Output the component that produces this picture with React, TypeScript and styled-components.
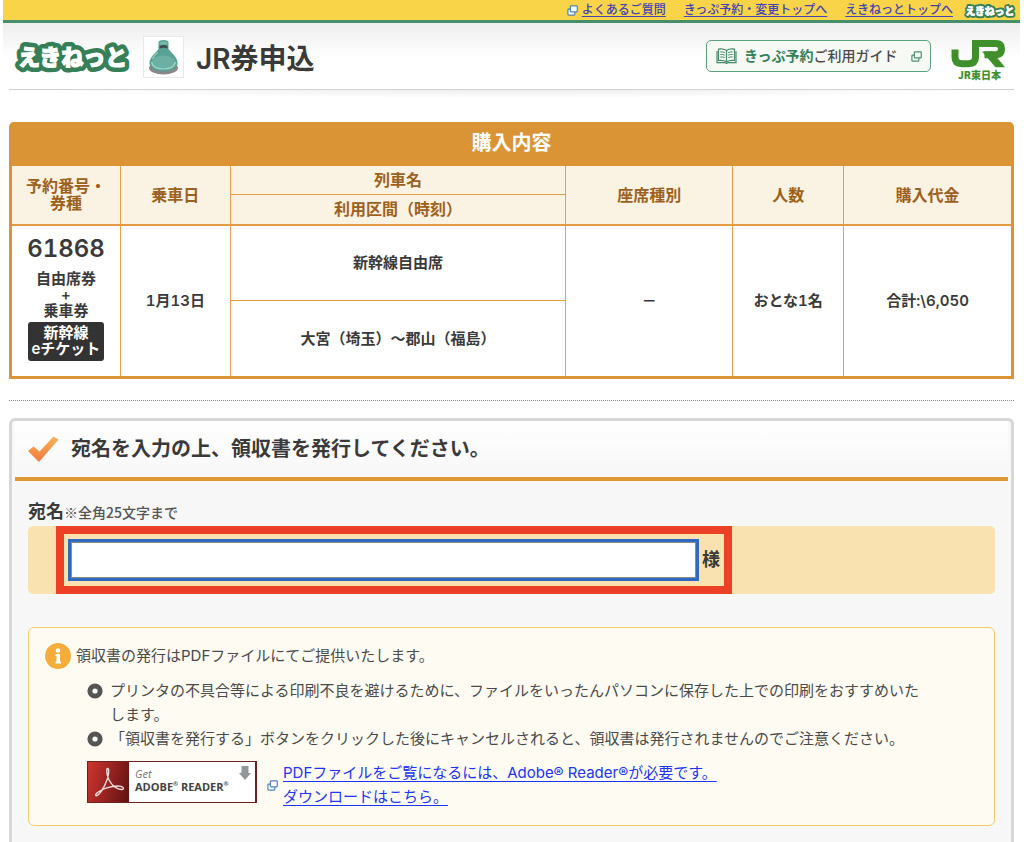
import React from 'react';
import styled, { createGlobalStyle } from 'styled-components';

const GlobalStyle = createGlobalStyle`
  *, *::before, *::after { box-sizing: border-box; }
  body {
    margin: 0;
    background: #fff;
    color: #3a3a3a;
    font-family: Inter, "Noto Sans CJK JP", sans-serif;
    font-size: 15px;
    line-height: 24px;
  }
  h1, h2, p, ul { margin: 0; padding: 0; }
  svg { display: block; flex: none; }
`;

const Page = styled.div`
  display: flex;
  flex-direction: column;
  min-height: 100vh;
  padding: 0 4px 0 3px;
`;

const TopBar = styled.nav`
  display: flex;
  align-items: center;
  justify-content: flex-end;
  gap: 18px;
  height: 23px;
  padding-right: 3px;
  background: #f9d449;
  border-bottom: 3px solid #45906b;
`;

const TopLink = styled.a`
  display: flex;
  align-items: center;
  gap: 4px;
  color: #4343b4;
  font-size: 12px;
  font-weight: 500;
  line-height: 20px;
  text-decoration: none;
  span { text-decoration: underline; text-underline-offset: 2px; }
`;

const TopEnd = styled.div`
  display: flex;
  align-items: center;
  gap: 10px;
`;

const Header = styled.header`
  display: flex;
  align-items: center;
  height: 66px;
  padding: 0 14px 0 10px;
  background: linear-gradient(#eeeeee, #ffffff 36px);
`;

const BagFrame = styled.div`
  display: flex;
  justify-content: center;
  align-items: center;
  width: 41px;
  height: 42px;
  margin: 2px 12px 0 10px;
  background: #fff;
  border: 1px solid #e9e9e9;
`;

const Title = styled.h1`
  flex: 1;
  padding-top: 5px;
  font-size: 28px;
  line-height: 40px;
  font-weight: 600;
`;

const GuideLink = styled.a`
  display: flex;
  align-items: center;
  gap: 7px;
  width: 225px;
  height: 32px;
  margin-right: 20px;
  padding: 0 8px 0 9px;
  border: 1px solid #5ba27f;
  border-radius: 5px;
  background: #f6f9f4;
  color: #4a4a4a;
  font-size: 14px;
  font-weight: 500;
  text-decoration: none;
  white-space: nowrap;
  strong { color: #357f5b; }
  svg:last-child { margin-left: auto; }
`;

const JrMark = styled.div`
  padding-top: 6px;
`;

const HeaderRule = styled.div`
  height: 9px;
  margin: 0 6px;
  border-top: 1px solid #d2d2d2;
  background: radial-gradient(ellipse 50% 100% at 50% 0, #ededed, #ffffff);
`;

const Main = styled.main`
  display: flex;
  flex: 1;
  flex-direction: column;
  padding: 24px 6px 0;
`;

const Purchase = styled.section`
  border: 3px solid #db9435;
  border-radius: 5px 5px 0 0;
  background: #fff;
`;

const PurchaseTitle = styled.h2`
  height: 41px;
  background: #db9435;
  color: #fff;
  font-size: 20px;
  line-height: 36px;
  font-weight: 700;
  text-align: center;
`;

const Table = styled.table`
  width: 100%;
  table-layout: fixed;
  border-collapse: separate;
  border-spacing: 0;
  text-align: center;
  font-variant-numeric: tabular-nums;
`;

const Col = styled.col<{ $w?: number }>`
  width: ${({ $w }) => ($w ? `${$w}%` : 'auto')};
`;

const HeadCell = styled.th<{ $line?: boolean; $first?: boolean }>`
  height: 29px;
  padding: 0;
  background: #faf2e2;
  border-left: ${({ $first }) => ($first ? 0 : 1)}px solid #e5a04b;
  border-bottom: ${({ $line }) => ($line ? 1 : 0)}px solid #e5a04b;
  color: #9c6120;
  font-size: 16px;
  line-height: 17px;
  font-weight: 700;
`;

const Cell = styled.td<{ $top?: number; $first?: boolean }>`
  height: 76px;
  padding: 0;
  border-left: ${({ $first }) => ($first ? 0 : 1)}px solid #e5a04b;
  border-top: ${({ $top = 2 }) => $top}px solid #e39a40;
  font-size: 15px;
  line-height: 16px;
  font-weight: 600;
`;

const TicketNumber = styled.div`
  font-size: 24px;
  line-height: 24px;
  margin-bottom: 10px;
`;

const TicketBadge = styled.div`
  width: 76px;
  margin: 3px auto 5px;
  padding: 3px 0 4px;
  border-radius: 3px;
  background: #333;
  color: #fff;
`;

const Divider = styled.hr`
  width: 100%;
  margin: 21px 0 17px;
  border: 0;
  border-top: 1px dotted #8c8c8c;
`;

const Panel = styled.section`
  flex: 1;
  border: solid #d7d7d7;
  border-width: 3px 3px 0;
  border-radius: 6px 6px 0 0;
  background: #f7f7f7;
`;

const PanelHead = styled.div`
  display: flex;
  align-items: center;
  gap: 12px;
  height: 60px;
  margin: 0 3px;
  padding-left: 13px;
  border-bottom: 4px solid #e09735;
  background: linear-gradient(#ffffff, #f7f7f7);
`;

const PanelTitle = styled.h2`
  font-size: 20px;
  line-height: 32px;
  font-weight: 600;
`;

const PanelBody = styled.form`
  padding: 19px 16px 16px;
`;

const FieldLabel = styled.label`
  display: block;
  font-size: 18px;
  line-height: 24px;
  font-weight: 600;
  small {
    color: #555;
    font-family: "Noto Sans CJK JP", sans-serif;
    font-size: 14px;
    font-weight: 500;
  }
`;

const FieldBand = styled.div`
  height: 68px;
  margin: 2px 0 33px;
  padding-left: 28px;
  border-radius: 5px;
  background: #f9e1b0;
`;

const Highlight = styled.div`
  display: flex;
  align-items: center;
  gap: 3px;
  width: 72%;
  height: 68px;
  padding: 4px;
  border: 8px solid #ec4027;
  font-size: 18px;
  font-weight: 700;
`;

const NameInput = styled.input`
  flex: 1;
  min-width: 0;
  height: 42px;
  padding: 0 8px;
  border: 4px solid #8d8d8d;
  outline: 3px solid #2f6ac0;
  outline-offset: -3px;
  background: #fff;
  font: inherit;
`;

const InfoBox = styled.div`
  padding: 15px 16px 16px;
  border: 1px solid #f4cb68;
  border-radius: 6px;
  background: #fefbf3;
  color: #4a4a4a;
`;

const InfoLead = styled.p`
  display: flex;
  align-items: center;
  gap: 5px;
  height: 26px;
`;

const Notes = styled.ul`
  margin-top: 10px;
  padding: 0 48px 0 42px;
  list-style: none;
`;

const Note = styled.li`
  display: flex;
  gap: 7px;
  svg { margin-top: 4px; }
`;

const ReaderRow = styled.div`
  display: flex;
  align-items: flex-start;
  gap: 10px;
  margin-top: 10px;
  padding-left: 42px;
`;

const ReaderLink = styled.a`
  display: flex;
  align-items: center;
  gap: 5px;
  color: #2034f5;
  text-underline-offset: 3px;
`;

const ReaderBadge = styled.a`
  display: flex;
  width: 170px;
  height: 42px;
  border: 1px solid #6d2222;
  border-right-width: 2px;
  background: #fff;
  color: #444;
  text-decoration: none;
`;

const BadgeMark = styled.span`
  display: flex;
  width: 41px;
  background: linear-gradient(105deg, #cf352f, #5f1111);
`;

const BadgeText = styled.span`
  display: flex;
  flex: 1;
  flex-direction: column;
  justify-content: flex-start;
  padding: 4px 0 0 6px;
  font-family: "Open Sans", sans-serif;
  font-size: 11px;
  line-height: 13px;
  white-space: nowrap;
  em { color: #777; }
  strong { font-weight: 700; }
  sup { font-size: 6px; line-height: 0; }
`;

const BadgeTop = styled.span`
  display: flex;
  align-items: flex-end;
  justify-content: space-between;
  padding-right: 4px;
`;

const PopupIcon = ({ color, fill = '#fff', size = 11 }: { color: string; fill?: string; size?: number }) => (
  <svg width={size} height={size} viewBox="0 0 12 12" aria-hidden="true">
    <rect x="1" y="4.5" width="7.5" height="6.5" rx=".6" fill={fill} stroke={color} strokeWidth="1.3" />
    <rect x="3.7" y="1" width="7.5" height="6.5" rx=".6" fill={fill} stroke={color} strokeWidth="1.3" />
  </svg>
);

const EkinetLogo = ({ small = false }: { small?: boolean }) => (
  <svg width={small ? 54 : 120} height={small ? 17 : 38} viewBox="0 0 120 38" role="img" aria-label="えきねっと">
    <text
      x="5"
      y="28"
      fontFamily='"Noto Sans CJK JP", sans-serif'
      fontSize="22"
      fontWeight="900"
      fill="#fff"
      stroke="#377f58"
      strokeWidth="10"
      strokeLinejoin="round"
      paintOrder="stroke"
    >
      えきねっと
    </text>
    <text x="5" y="28" fontFamily='"Noto Sans CJK JP", sans-serif' fontSize="22" fontWeight="900" fill="#fff" stroke="#fff" strokeWidth="1">
      えきねっと
    </text>
  </svg>
);

const BagIcon = () => (
  <svg width="33" height="38" viewBox="0 0 33 38" aria-hidden="true">
    <ellipse cx="16.5" cy="30" rx="14.5" ry="6.5" fill="#8b8787" />
    <path d="M11.500 4Q12 2 16.500 2Q21 2 21.500 4V11Q23 13 27 17Q31 22 30.500 26Q29 33.500 16.500 33.500Q4 33.500 2.500 26Q2 22 6 17Q10 13 11.500 11Z" fill="#58a294" />
    <path d="M12.500 4.500Q16.500 2.500 20.500 4.500V6.500H12.500Z" fill="#74b9ac" />
    <path d="M12.500 8Q16.500 6 20.500 8V10.500Q16.500 9 12.500 10.500Z" fill="#3c4e4b" />
    <ellipse cx="16.500" cy="24" rx="11.500" ry="6.500" fill="#6bb0a2" />
    <path d="M4.500 24Q6 31 16.500 31Q27 31 28.500 24" fill="none" stroke="#a5d6cb" strokeWidth="1.200" />
    <path d="M10.500 14.500Q6.500 17.500 5.500 21" fill="none" stroke="#93ccbf" strokeWidth="1.500" />
  </svg>
);

const BookIcon = () => (
  <svg width="21" height="16" viewBox="0 0 21 16" aria-hidden="true">
    <path d="M10.500 2.500Q7 .3 2.500 1.200V12.500Q7 11.700 10.500 13.800Q14 11.700 18.500 12.500V1.200Q14 .3 10.500 2.500V13.800" fill="#f6f9f4" stroke="#43896a" strokeWidth="1.200" />
    <path d="M1 3V14.700H9L10.500 15.400L12 14.700H20V3" fill="none" stroke="#43896a" strokeWidth="1.200" />
    <path d="M4.300 4Q6.500 3.600 8.800 4.600M4.300 6.500Q6.500 6.100 8.800 7.100M4.300 9Q6.500 8.600 8.800 9.600M16.700 4Q14.500 3.600 12.200 4.600M16.700 6.500Q14.500 6.100 12.200 7.100M16.700 9Q14.500 8.600 12.200 9.600" fill="none" stroke="#43896a" strokeWidth="1" />
  </svg>
);

const JrLogo = () => (
  <svg width="55" height="43" viewBox="0 0 55 43" role="img" aria-label="JR東日本">
    <path d="M4 11.500V19Q4 25.700 11 25.700H17.500Q24.500 25.700 24.500 19V5.500H45Q50.500 5.500 50.500 11T45 16.700H33.500" fill="none" stroke="#3f8f2b" strokeWidth="7" />
    <path d="M31 13.500H41L54 29.200H44.500Z" fill="#3f8f2b" />
    <text x="7" y="41" fontFamily='"Noto Sans CJK JP", sans-serif' fontSize="10" fontWeight="900" fill="#3f8f2b">
      JR東日本
    </text>
  </svg>
);

const CheckIcon = () => (
  <svg width="31" height="28" viewBox="0 0 31 28" aria-hidden="true">
    <defs>
      <linearGradient id="check" x1="0" y1="0" x2="0" y2="1">
        <stop offset="0" stopColor="#f8b25a" />
        <stop offset="1" stopColor="#ee7a3c" />
      </linearGradient>
    </defs>
    <path d="M0 16L5.500 11.500L11.500 16.500L25.500 1.500L30.500 4.500L11 27Z" fill="url(#check)" />
  </svg>
);

const InfoIcon = () => (
  <svg width="26" height="26" viewBox="0 0 26 26" aria-hidden="true">
    <circle cx="13" cy="13" r="13" fill="#f5ae3b" />
    <circle cx="13" cy="7.500" r="2.300" fill="#fff" />
    <path d="M10.500 11H15V18.500H16V20.500H10.500V18.500H11.500V13H10.500Z" fill="#fff" />
  </svg>
);

const BulletIcon = () => (
  <svg width="16" height="16" viewBox="0 0 16 16" aria-hidden="true">
    <circle cx="8" cy="8" r="5.100" fill="#fefaf1" stroke="#555" strokeWidth="5" />
  </svg>
);

const AcrobatIcon = () => (
  <svg width="41" height="40" viewBox="0 0 41 40" aria-hidden="true">
    <path
      d="M19.500 6.500C18 7 19 14 21 18C24 24 30 28 34 27.500C37 27 35 24 30 24C23 24 14 27 9.500 30.500C6 33.500 8 35 11 32C15 28 19.500 19 20.500 12C21 8 20.500 6.200 19.500 6.500Z"
      fill="none"
      stroke="#ecdcdc"
      strokeWidth="1.400"
    />
  </svg>
);

const DownArrow = () => (
  <svg width="12" height="14" viewBox="0 0 12 14" aria-hidden="true">
    <path d="M2.500 0H9.500V7H12L6 14L0 7H2.500Z" fill="#929699" />
  </svg>
);

export default function App() {
  return (
    <>
      <GlobalStyle />
      <Page>
        <TopBar>
          <TopLink href="#faq">
            <PopupIcon color="#4b84ae" />
            <span>よくあるご質問</span>
          </TopLink>
          <TopLink href="#reserve"><span>きっぷ予約・変更トップへ</span></TopLink>
          <TopEnd>
            <TopLink href="#top"><span>えきねっとトップへ</span></TopLink>
            <EkinetLogo small />
          </TopEnd>
        </TopBar>
        <Header>
          <EkinetLogo />
          <BagFrame><BagIcon /></BagFrame>
          <Title>JR券申込</Title>
          <GuideLink href="#guide">
            <BookIcon />
            <span><strong>きっぷ予約</strong>ご利用ガイド</span>
            <PopupIcon color="#4b8f70" fill="#f6f9f4" />
          </GuideLink>
          <JrMark><JrLogo /></JrMark>
        </Header>
        <HeaderRule />
        <Main>
          <Purchase>
            <PurchaseTitle>購入内容</PurchaseTitle>
            <Table>
              <colgroup>
                <Col $w={10.8} />
                <Col $w={11} />
                <Col $w={33.6} />
                <Col $w={16.7} />
                <Col $w={11.1} />
                <Col />
              </colgroup>
              <thead>
                <tr>
                  <HeadCell rowSpan={2} $first>予約番号・<br />券種</HeadCell>
                  <HeadCell rowSpan={2}>乗車日</HeadCell>
                  <HeadCell $line>列車名</HeadCell>
                  <HeadCell rowSpan={2}>座席種別</HeadCell>
                  <HeadCell rowSpan={2}>人数</HeadCell>
                  <HeadCell rowSpan={2}>購入代金</HeadCell>
                </tr>
                <tr>
                  <HeadCell>利用区間（時刻）</HeadCell>
                </tr>
              </thead>
              <tbody>
                <tr>
                  <Cell rowSpan={2} $first>
                    <TicketNumber>61868</TicketNumber>
                    自由席券<br />+<br />乗車券
                    <TicketBadge>新幹線<br />eチケット</TicketBadge>
                  </Cell>
                  <Cell rowSpan={2}>1月13日</Cell>
                  <Cell>新幹線自由席</Cell>
                  <Cell rowSpan={2}>－</Cell>
                  <Cell rowSpan={2}>おとな1名</Cell>
                  <Cell rowSpan={2}>合計:\6,050</Cell>
                </tr>
                <tr>
                  <Cell $top={1}>大宮（埼玉）〜郡山（福島）</Cell>
                </tr>
              </tbody>
            </Table>
          </Purchase>
          <Divider />
          <Panel>
            <PanelHead>
              <CheckIcon />
              <PanelTitle>宛名を入力の上、領収書を発行してください。</PanelTitle>
            </PanelHead>
            <PanelBody>
              <FieldLabel htmlFor="addressee">宛名<small>※全角25文字まで</small></FieldLabel>
              <FieldBand>
                <Highlight>
                  <NameInput id="addressee" type="text" maxLength={25} />
                  <span>様</span>
                </Highlight>
              </FieldBand>
              <InfoBox>
                <InfoLead>
                  <InfoIcon />
                  領収書の発行はPDFファイルにてご提供いたします。
                </InfoLead>
                <Notes>
                  <Note>
                    <BulletIcon />
                    <span>プリンタの不具合等による印刷不良を避けるために、ファイルをいったんパソコンに保存した上での印刷をおすすめいたします。</span>
                  </Note>
                  <Note>
                    <BulletIcon />
                    <span>「領収書を発行する」ボタンをクリックした後にキャンセルされると、領収書は発行されませんのでご注意ください。</span>
                  </Note>
                </Notes>
                <ReaderRow>
                  <ReaderBadge href="#reader">
                    <BadgeMark><AcrobatIcon /></BadgeMark>
                    <BadgeText>
                      <BadgeTop><em>Get</em><DownArrow /></BadgeTop>
                      <strong>ADOBE<sup>®</sup> READER<sup>®</sup></strong>
                    </BadgeText>
                  </ReaderBadge>
                  <ReaderLink href="#download">
                    <PopupIcon color="#4f83c4" />
                    <span>PDFファイルをご覧になるには、Adobe® Reader®が必要です。<br />ダウンロードはこちら。</span>
                  </ReaderLink>
                </ReaderRow>
              </InfoBox>
            </PanelBody>
          </Panel>
        </Main>
      </Page>
    </>
  );
}
